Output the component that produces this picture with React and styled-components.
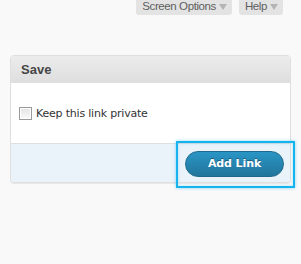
import React from 'react';
import styled, { createGlobalStyle } from 'styled-components';

const Global = createGlobalStyle`
    body {
        margin: 0;
        background: #f9f9f9;
        font-family: 'Liberation Sans', Arial, sans-serif;
    }
`

const Page = styled.div`
    width: 301px;
    height: 264px;
    background: #f9f9f9;
`

const TopBar = styled.div`
    display: flex;
    justify-content: flex-end;
    gap: 7px;
    padding-right: 18px;
`

const Tab = styled.div`
    height: 19px;
    padding: 0 5px 0 6px;
    display: flex;
    align-items: center;
    gap: 3px;
    background: #e3e3e3;
    border-radius: 0 0 3px 3px;
    color: #5e5e5e;
    font-size: 11.5px;
    line-height: 14px;
    margin-top: -4px;
    padding-top: 0;
    letter-spacing: -0.4px;
`

const Arrow = styled.span`
    width: 0;
    height: 0;
    border-left: 4px solid transparent;
    border-right: 4px solid transparent;
    border-top: 6px solid #b4b4b4;
    margin-top: 2px;
`

const Box = styled.div`
    margin: 40px 0 0 10px;
    width: 279px;
    border: 1px solid #dfdfdf;
    border-radius: 4px;
    background: #fff;
    box-shadow: 0 1px 0 #e8e8e8;
`

const Header = styled.div`
    height: 26px;
    padding-left: 10px;
    display: flex;
    align-items: center;
    background: linear-gradient(to bottom, #ececec, #dfdfdf);
    border-radius: 3px 3px 0 0;
    border-bottom: 1px solid #dfdfdf;
    color: #464646;
    font-size: 13px;
    font-weight: bold;
`

const Body = styled.div`
    height: 60px;
    padding-left: 8px;
    display: flex;
    align-items: center;
`

const Check = styled.label`
    display: flex;
    align-items: center;
    gap: 4px;
    color: #333;
    font-size: 11px;
    font-family: 'DejaVu Sans', Verdana, sans-serif;
    letter-spacing: -0.2px;
`

const Tick = styled.span`
    width: 11px;
    height: 11px;
    border: 1px solid #9a9a9a;
    background: linear-gradient(to bottom, #e4e4e4, #fafafa);
    box-shadow: inset 0 0 0 1px #fff;
`

const Footer = styled.div`
    height: 38px;
    border-top: 1px solid #dfdfdf;
    background: #eaf2fa;
    border-radius: 0 0 3px 3px;
    display: flex;
    align-items: center;
    justify-content: flex-end;
    padding-right: 6px;
`

const Button = styled.button`
    position: relative;
    width: 99px;
    height: 26px;
    border: 1px solid #1e6a8d;
    border-radius: 13px;
    background: linear-gradient(to bottom, #2a95c5, #21759b);
    color: #fff;
    font-family: 'DejaVu Sans', Verdana, sans-serif;
    font-size: 11px;
    font-weight: bold;
    letter-spacing: -0.1px;
    text-shadow: 0 -1px 0 rgba(0, 0, 0, 0.35);
    margin-top: 1px;

    &::after {
        content: '';
        position: absolute;
        left: -10px;
        right: -12px;
        top: -11px;
        bottom: -12px;
        border: 2px solid #16b4ee;
        box-shadow: 0 0 3px rgba(22, 180, 238, 0.5), inset 0 0 3px rgba(22, 180, 238, 0.35);
        pointer-events: none;
    }
`

export default function App() {
    return (
        <Page>
            <Global />
            <TopBar>
                <Tab>Screen Options <Arrow /></Tab>
                <Tab>Help <Arrow /></Tab>
            </TopBar>
            <Box>
                <Header>Save</Header>
                <Body>
                    <Check><Tick />Keep this link private</Check>
                </Body>
                <Footer>
                    <Button>Add Link</Button>
                </Footer>
            </Box>
        </Page>
    )
}
